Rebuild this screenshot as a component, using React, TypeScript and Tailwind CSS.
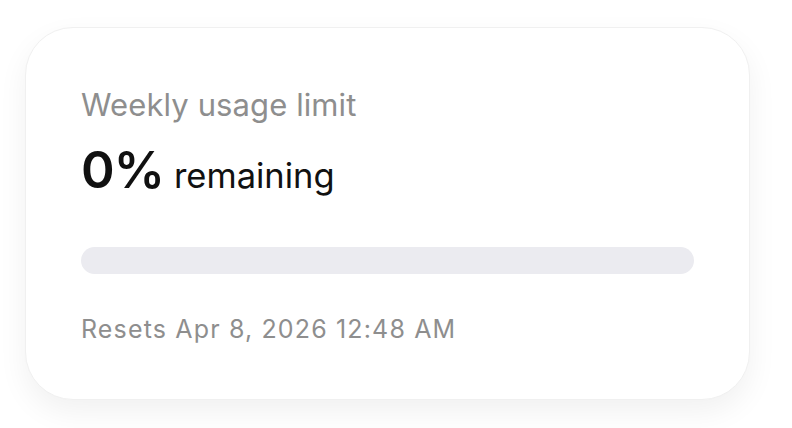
export default function App() {
  const remaining = 0;

  return (
    <div className="min-h-screen bg-white pt-[27px] pl-[25px] font-['Inter',sans-serif]">
      <div className="w-[725px] h-[373px] rounded-[48px] border border-[#f0f0f0] bg-white shadow-[0_12px_30px_rgba(0,0,0,0.06)] px-[55px] pt-[60px]">
        <div className="text-[31px] leading-[34px] tracking-[0.1px] text-[#8e8e8e]">Weekly usage limit</div>
        <div className="mt-[20px] flex items-baseline gap-[10px] text-[#111]">
          <span className="text-[51px] leading-[56px] font-semibold tracking-[-1px]">{remaining}%</span>
          <span className="text-[34.5px] leading-[40px]">remaining</span>
        </div>
        <div className="mt-[49px] h-[27px] w-full rounded-full bg-[#ebebf0]" />
        <div className="mt-[41px] text-[25px] leading-[28px] tracking-[1.15px] text-[#8e8e8e]">Resets Apr 8, 2026 12:48 AM</div>
      </div>
    </div>
  );
}
